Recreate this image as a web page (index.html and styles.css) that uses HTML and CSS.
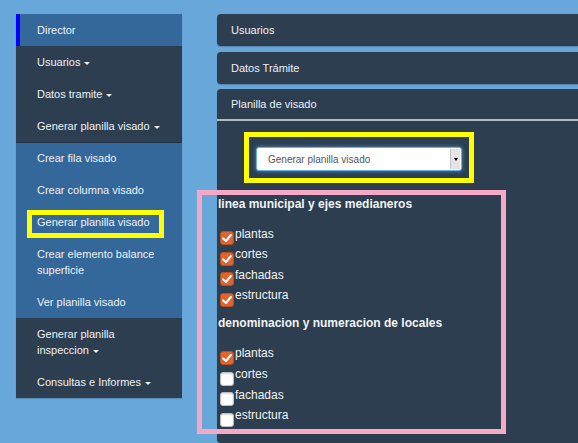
FILE: index.html
```html
<!DOCTYPE html>
<html lang="es">
<head>
<meta charset="utf-8">
<title>Planilla de visado</title>
<link rel="stylesheet" href="styles.css">
</head>
<body>
<div class="page">
  <nav class="sidebar">
    <div class="item active">Director</div>
    <div class="item">Usuarios <span class="caret"></span></div>
    <div class="item">Datos tramite <span class="caret"></span></div>
    <div class="item">Generar planilla visado <span class="caret"></span></div>
    <div class="submenu">
      <div class="item">Crear fila visado</div>
      <div class="item">Crear columna visado</div>
      <div class="item">Generar planilla visado</div>
      <div class="item">Crear elemento balance superficie</div>
      <div class="item">Ver planilla visado</div>
    </div>
    <div class="item">Generar planilla inspeccion <span class="caret"></span></div>
    <div class="item">Consultas e Informes <span class="caret"></span></div>
  </nav>
  <main class="main">
    <section class="panel panel-first"><div class="panel-heading">Usuarios</div></section>
    <section class="panel panel-second"><div class="panel-heading">Datos Trámite</div></section>
    <section class="panel panel-open">
      <div class="panel-heading">Planilla de visado</div>
      <div class="panel-body">
        <div class="select">
          <span class="select-text">Generar planilla visado</span>
          <span class="select-arrow"></span>
        </div>
        <div class="group-title first">linea municipal y ejes medianeros</div>
        <div class="check-row"><span class="box checked"><svg viewBox="0 0 14 14" width="12" height="12"><polyline points="2.5,7.5 5.8,10.5 11.5,3.5" /></svg></span><span class="label">plantas</span></div>
        <div class="check-row"><span class="box checked"><svg viewBox="0 0 14 14" width="12" height="12"><polyline points="2.5,7.5 5.8,10.5 11.5,3.5" /></svg></span><span class="label">cortes</span></div>
        <div class="check-row"><span class="box checked"><svg viewBox="0 0 14 14" width="12" height="12"><polyline points="2.5,7.5 5.8,10.5 11.5,3.5" /></svg></span><span class="label">fachadas</span></div>
        <div class="check-row"><span class="box checked"><svg viewBox="0 0 14 14" width="12" height="12"><polyline points="2.5,7.5 5.8,10.5 11.5,3.5" /></svg></span><span class="label">estructura</span></div>
        <div class="group-title">denominacion y numeracion de locales</div>
        <div class="check-row"><span class="box checked"><svg viewBox="0 0 14 14" width="12" height="12"><polyline points="2.5,7.5 5.8,10.5 11.5,3.5" /></svg></span><span class="label">plantas</span></div>
        <div class="check-row"><span class="box"></span><span class="label">cortes</span></div>
        <div class="check-row"><span class="box"></span><span class="label">fachadas</span></div>
        <div class="check-row"><span class="box"></span><span class="label">estructura</span></div>
      </div>
    </section>
  </main>
</div>
<div class="mark mark-side"></div>
<div class="mark mark-select"></div>
<div class="mark mark-checks"></div>
</body>
</html>
```

FILE: styles.css
```css
html, body {
  margin: 0;
  height: 100%;
  overflow: hidden;
}
body {
  position: relative;
  background: #68a7da;
  font-family: "Liberation Sans", Arial, sans-serif;
}
.page {
  display: flex;
  align-items: flex-start;
  gap: 35px;
  padding: 14px 0 0 16px;
  height: 100vh;
  box-sizing: border-box;
}
.sidebar {
  width: 166px;
  flex: none;
  background: #2c3e50;
  box-shadow: 0 1px 1px rgba(0, 0, 0, 0.15);
}
.item {
  padding: 8px 15px 8px 21px;
  font-size: 11px;
  line-height: 16px;
  color: #eef1f4;
}
.item.active {
  background: #34679a;
  border-left: 4px solid #0000ff;
  padding-left: 17px;
}
.submenu {
  background: #34679a;
  box-shadow: inset 0 1px 0 #243446;
}
.caret {
  display: inline-block;
  width: 0;
  height: 0;
  margin-left: 1px;
  vertical-align: middle;
  border-top: 3px solid #eef1f4;
  border-left: 3px solid transparent;
  border-right: 3px solid transparent;
}
.main {
  flex: 1;
  min-width: 0;
  height: calc(100vh - 14px);
  display: flex;
  flex-direction: column;
}
.panel {
  background: #2c3e50;
  border-radius: 4px 0 0 4px;
  box-shadow: 0 1px 1px rgba(0, 0, 0, 0.2);
}
.panel-second {
  margin-top: 6px;
}
.panel-open {
  margin-top: 5px;
  flex: 1;
  display: flex;
  flex-direction: column;
}
.panel-heading {
  height: 32px;
  line-height: 32px;
  padding: 0 14px;
  font-size: 11px;
  color: #eef1f4;
}
.panel-open .panel-heading {
  height: 30px;
  line-height: 31px;
  border-bottom: 2px solid #b4babf;
}
.panel-body {
  flex: 1;
  padding: 26px 0 0 1px;
  color: #f2f3f4;
}
.select {
  margin-left: 38px;
  width: 206px;
  height: 24px;
  box-sizing: border-box;
  display: flex;
  align-items: center;
  padding-left: 11px;
  background: #fff;
  border: 1px solid #66afe9;
  border-radius: 3px;
  box-shadow: 0 0 4px rgba(102, 175, 233, 0.7);
  font-size: 10px;
  color: #555;
}
.select-text {
  flex: 1;
}
.select-arrow {
  width: 9px;
  height: 20px;
  margin-right: 1px;
  background: #e4e4e4;
  border-left: 1px solid #c4c4c4;
  display: flex;
  align-items: center;
  justify-content: center;
}
.select-arrow::after {
  content: "";
  width: 0;
  height: 0;
  border-top: 3px solid #000;
  border-left: 2.5px solid transparent;
  border-right: 2.5px solid transparent;
}
.group-title {
  font-size: 12px;
  font-weight: bold;
  line-height: 15px;
  margin: 7.3px 0 15px;
}
.group-title.first {
  margin-top: 25.5px;
}
.check-row {
  display: flex;
  align-items: flex-start;
  height: 20.67px;
  font-size: 12px;
  line-height: 15px;
}
.box {
  flex: none;
  width: 14px;
  height: 14px;
  box-sizing: border-box;
  margin: 4.5px 1px 0 2px;
  border-radius: 3px;
  background: #fff;
  border: 1px solid #b9bec3;
  box-shadow: inset 0 1px 2px rgba(0, 0, 0, 0.15);
  display: flex;
  align-items: center;
  justify-content: center;
}
.box.checked {
  background: #e0642f;
  border-color: #b8501f;
  box-shadow: none;
}
.box svg polyline {
  fill: none;
  stroke: #fff;
  stroke-width: 2.4;
  stroke-linecap: round;
  stroke-linejoin: round;
}
.mark {
  position: absolute;
  box-sizing: border-box;
  pointer-events: none;
}
.mark-side {
  left: 27px;
  top: 210px;
  width: 137px;
  height: 28px;
  border: 5px solid #ffff00;
}
.mark-select {
  left: 244px;
  top: 132px;
  width: 230px;
  height: 51px;
  border: 5px solid #ffff00;
}
.mark-checks {
  left: 197px;
  top: 190px;
  width: 309px;
  height: 244px;
  border: 5px solid #f6a9c7;
}
```
